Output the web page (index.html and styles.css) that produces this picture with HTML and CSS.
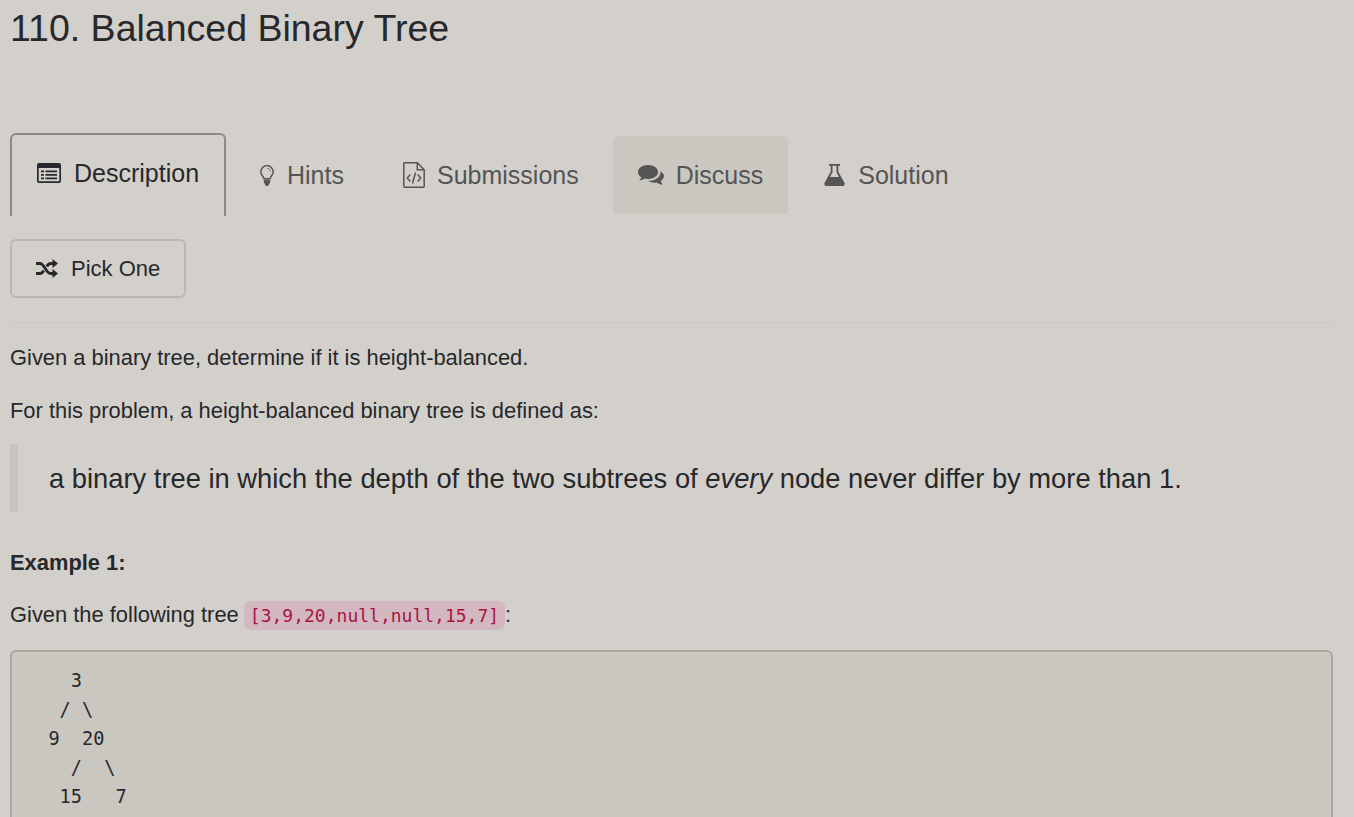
FILE: index.html
```html
<!DOCTYPE html>
<html lang="en">
<head>
<meta charset="utf-8">
<title>110. Balanced Binary Tree</title>
<link rel="stylesheet" href="styles.css">
</head>
<body>
<main class="page">
  <h1 class="title">110. Balanced Binary Tree</h1>
  <nav class="tabs">
    <a class="tab tab-active">
      <svg class="ico ico-desc" viewBox="0 0 24 20"><path fill-rule="evenodd" d="M2 0h20a2 2 0 0 1 2 2v16a2 2 0 0 1-2 2H2a2 2 0 0 1-2-2V2a2 2 0 0 1 2-2zM1.700 5v12.800c0 .3.2.5.5.5h19.600c.3 0 .5-.2.5-.5V5zM4 7.500h3v1.700H4zM8.500 7.500H20v1.700H8.500zM4 11h3v1.700H4zM8.500 11H20v1.700H8.500zM4 14.500h3v1.700H4zM8.500 14.500H20v1.700H8.500z"/></svg>
      <span>Description</span>
    </a>
    <a class="tab tab-hints">
      <svg class="ico ico-hint" viewBox="0 0 14 21"><path fill="none" stroke="currentColor" stroke-width="1.500" d="M4 13.800C3.600 11.400.8 10 .8 6.800a6.200 6.200 0 0 1 12.400 0c0 3.200-2.800 4.600-3.200 7z"/><path d="M3.800 14.800h6.400V17.300c0 .5-.4.9-.9 1.100-.3 1.500-1 2.600-2.300 2.600s-2-1.100-2.300-2.600c-.5-.2-.9-.6-.9-1.100z"/><path fill="none" stroke="currentColor" stroke-width=".8" d="M7 3.200c1.900 0 3.400 1.500 3.400 3.400"/></svg>
      <span>Hints</span>
    </a>
    <a class="tab tab-sub">
      <svg class="ico ico-sub" viewBox="0 0 22 26"><path fill="none" stroke="currentColor" stroke-width="1.500" d="M1.700.8h12.600l6.900 6.900v16.600a.9.900 0 0 1-.9.900H1.700a.9.900 0 0 1-.9-.9V1.700a.9.900 0 0 1 .9-.9zM14.300.8v6.900h6.900M7.300 12.500l-3 3.500 3 3.500M14.700 12.500l3 3.500-3 3.500M12.500 10.500l-3 11"/></svg>
      <span>Submissions</span>
    </a>
    <a class="tab tab-hover">
      <svg class="ico ico-disc" viewBox="0 0 26 20"><path d="M10 0C4.500 0 0 3.100 0 7c0 2.100 1.300 3.900 3.300 5.200-.3 1.300-1.200 2.500-2.400 3.300 2.400 0 4.400-.8 5.800-1.900 1.100.3 2.200.4 3.300.4 5.500 0 10-3.100 10-7S15.500 0 10 0z"/><path d="M22.500 6.300c.3 2.600-.8 5.100-3.200 6.900-2.500 1.900-6 2.900-9.500 2.600 1.500 1.100 3.900 1.900 6.400 1.900.9 0 1.700-.1 2.600-.3 1.300 1 3.500 2.100 6.100 2.100-1.100-.9-1.900-2.100-2.300-3.400 2.100-1.100 3.400-3 3.400-5 0-1.700-1.400-3.300-3.500-4.800z"/></svg>
      <span>Discuss</span>
    </a>
    <a class="tab tab-sol">
      <svg class="ico ico-sol" viewBox="0 0 21 22"><path fill-rule="evenodd" d="M5 0h11v1.700h-1.700v6l6 10.900c.9 1.700 0 3.400-2 3.400H2.700c-2 0-2.900-1.700-2-3.400l6-10.900v-6H5zM8.500 1.700v6.600L6 13h9l-2.500-4.700V1.700z"/></svg>
      <span>Solution</span>
    </a>
  </nav>
  <button class="pick" type="button">
    <svg class="ico-shuffle" viewBox="0 0 22 19"><path fill="none" stroke="currentColor" stroke-width="2.800" d="M0 4.500h4c4.500 0 6 10 10.500 10H18M0 14.500h4c1.700 0 2.800-1.400 3.700-3M10.800 7.500c.9-1.600 2-3 3.700-3H18"/><path d="M16.500 0 22 4.500 16.500 9zM16.500 10 22 14.500 16.500 19z"/></svg>
    <span>Pick One</span>
  </button>
  <hr class="rule">
  <article class="content">
    <p>Given a binary tree, determine if it is height-balanced.</p>
    <p>For this problem, a height-balanced binary tree is defined as:</p>
    <blockquote>a binary tree in which the depth of the two subtrees of <em>every</em> node never differ by more than 1.</blockquote>
    <p class="example"><strong>Example 1:</strong></p>
    <p>Given the following tree <code>[3,9,20,null,null,15,7]</code>:</p>
    <pre>    3
   / \
  9  20
    /  \
   15   7
</pre>
  </article>
</main>
</body>
</html>
```
FILE: styles.css
```css
* { box-sizing: border-box; }
html, body { height: 100%; }
body {
  margin: 0;
  background: #d3d0cb;
  color: #26282b;
  font-family: "Liberation Sans", Arial, sans-serif;
  font-size: 21.900px;
  line-height: 28px;
  overflow: hidden;
}
.page { padding: 0 21px 0 10px; height: 817px; overflow: hidden; }
.title {
  margin: 0;
  padding-top: 8px;
  font-size: 37.500px;
  line-height: 40px;
  font-weight: 400;
  color: #26282b;
}
.tabs { display: flex; gap: 10px; margin-top: 85px; height: 83px; align-items: flex-start; }
.tab {
  display: flex;
  align-items: center;
  height: 78px;
  margin-top: 3px;
  padding: 0 25px;
  gap: 12px;
  font-size: 25px;
  color: #555;
  border-radius: 6px 6px 0 0;
}
.tab-active {
  margin-top: 0;
  height: 83px;
  border: 2px solid #8c8a84;
  border-bottom: 0;
  color: #26282b;
  padding: 0 25px 5px;
  width: 216px;
  gap: 13px;
}
.tab-hints { padding: 0 24px; gap: 13px; }
.tab-sub { padding-right: 24px; }
.tab-sol { margin-left: 1px; gap: 13px; }
.tab-hover { background: #cac7c0; }
.ico { display: block; fill: currentColor; flex: none; }
.ico-desc { width: 24px; height: 20px; }
.ico-hint { width: 14px; height: 21px; }
.ico-sub { width: 22px; height: 26px; }
.ico-disc { width: 26px; height: 20px; }
.ico-sol { width: 21px; height: 22px; }
.pick {
  display: flex;
  align-items: center;
  gap: 13px;
  margin-top: 23px;
  width: 176px;
  height: 59px;
  padding: 0 0 0 24px;
  background: transparent;
  border: 2px solid #bab7af;
  border-radius: 6px;
  font: inherit;
  font-size: 22px;
  color: #26282b;
}
.ico-shuffle { width: 22px; height: 19px; fill: currentColor; flex: none; }
.rule { margin: 24px 0 0; border: 0; border-top: 1px dotted #c4c1ba; height: 0; }
.content p { margin: 0; }
.content > p:first-child { margin-top: 21px; }
.content > p + p { margin-top: 25px; }
blockquote {
  margin: 19px 0 0;
  padding: 18px 20px 16px 31px;
  border-left: 8px solid #c7c4bd;
  font-size: 27.330px;
  line-height: 34px;
}
.content > p.example { margin-top: 37px; }
.content > p.example + p { margin-top: 24px; }
code {
  display: inline-block;
  margin-left: -1px;
  padding: 0 6px;
  background: #d3b8c2;
  color: #a8143f;
  border-radius: 6px;
  font-family: "DejaVu Sans Mono", monospace;
  font-size: 18px;
  line-height: 29px;
}
pre {
  margin: 20px 0 0;
  padding: 14px 14px;
  background: #cac7c0;
  border: 2px solid #a9a79f;
  border-radius: 6px;
  font-family: "DejaVu Sans Mono", monospace;
  font-size: 18.600px;
  line-height: 29px;
  color: #26282b;
  height: 300px;
}
```
